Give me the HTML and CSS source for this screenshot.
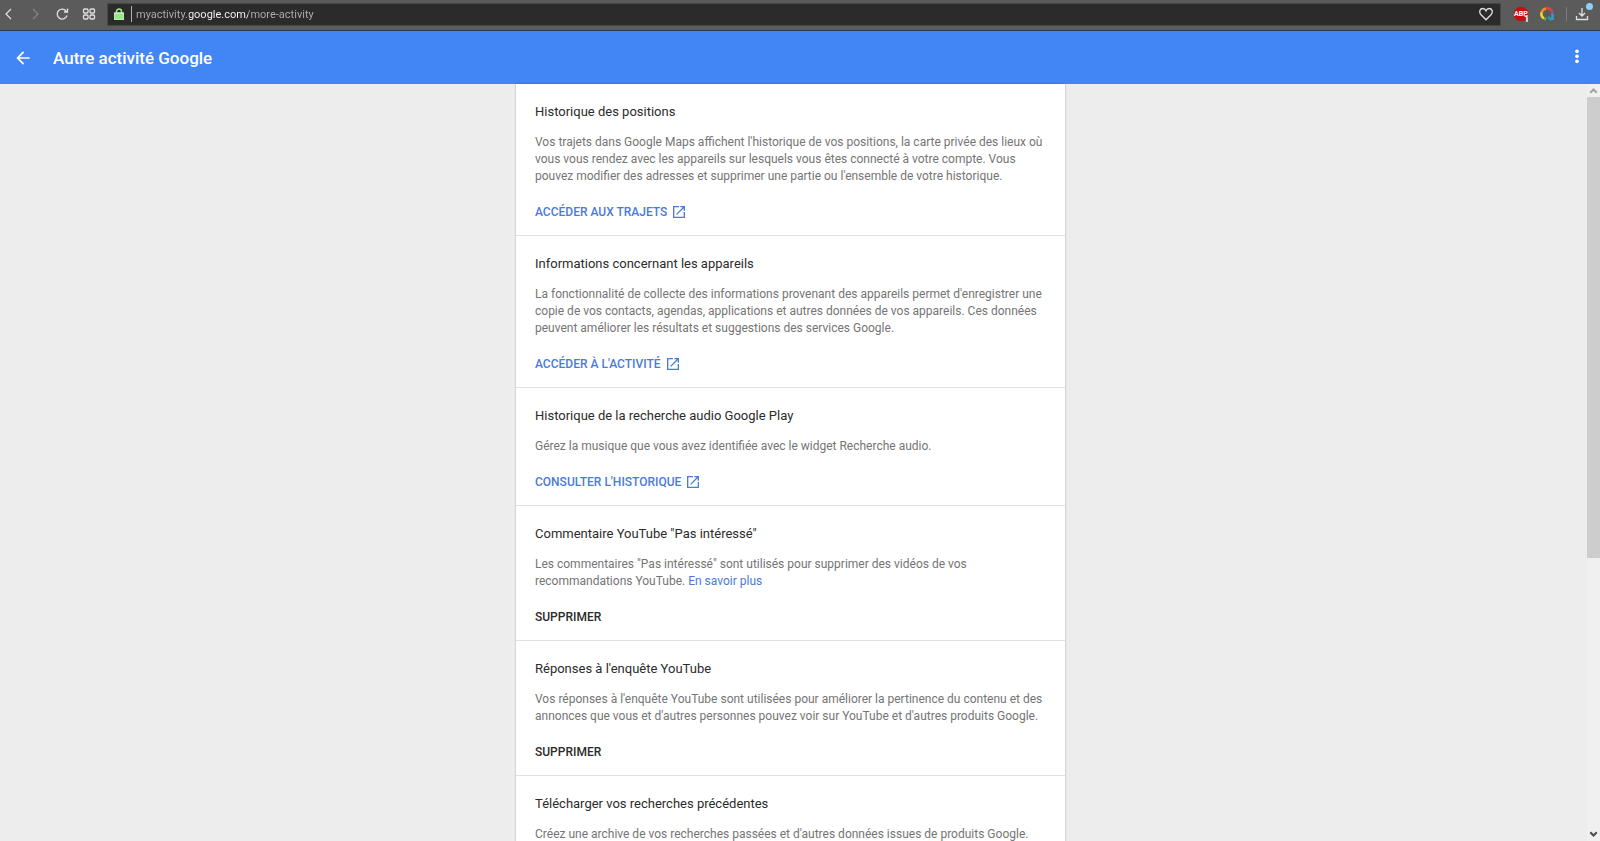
FILE: index.html
```html
<!DOCTYPE html>
<html lang="fr">
<head>
    <meta charset="UTF-8">
    <meta name="viewport" content="width=device-width, initial-scale=1.0">
    <title>Autre activité Google</title>
    <link rel="stylesheet" href="styles.css">
</head>
<body>
    <!-- Barre du navigateur -->
    <div class="browser-bar">
        <div class="browser-nav">
            <button type="button" aria-label="Précédent"><svg viewBox="0 0 14 14"><path d="M10 2L5 7l5 5"/></svg></button>
            <button type="button" class="disabled" aria-label="Suivant"><svg viewBox="0 0 14 14"><path d="M5 2l5 5-5 5"/></svg></button>
            <button type="button" aria-label="Actualiser"><svg viewBox="0 0 14 14"><path d="M11.500 4.500A5 5 0 1 0 12 8.500M12.500 1.500v3.500H9"/></svg></button>
            <button type="button" aria-label="Accès rapide"><svg viewBox="0 0 14 14"><rect x="1.500" y="2" width="4.500" height="4" rx="1"/><rect x="8" y="2" width="4.500" height="4" rx="1"/><rect x="1.500" y="8" width="4.500" height="4" rx="1"/><rect x="8" y="8" width="4.500" height="4" rx="1"/></svg></button>
        </div>
        <div class="address">
            <svg class="lock" viewBox="0 0 10 12"><path d="M2.500 6V3.500a2.500 2.500 0 0 1 5 0V6" fill="none" stroke="#90ee7e" stroke-width="1.500"/><rect x="0" y="5" width="10" height="7" rx="1" fill="#90ee7e"/></svg>
            <span class="caret"></span>
            <input type="text" class="url" aria-label="Adresse" value="myactivity.google.com/more-activity">
            <button type="button" aria-label="Favoris"><svg viewBox="0 0 14 14"><path d="M7 12.800L2 7.800C-.5 4.800 1 1.500 3.800 1.500 5.500 1.500 6.500 2.500 7 3.800 7.500 2.500 8.500 1.500 10.200 1.500 13 1.500 14.500 4.800 12 7.800z"/></svg></button>
        </div>
        <div class="extensions">
            <button type="button" class="extension" aria-label="Adblock Plus">
                <svg viewBox="0 0 14 14"><path d="M4 0h6l4 4v6l-4 4H4L0 10V4z" fill="#c70d0d" stroke="none"/></svg>
                <span class="abp">ABP</span>
                <span class="count">1</span>
            </button>
            <button type="button" class="extension" aria-label="Recherche">
                <svg viewBox="0 0 14 14"><g stroke-width="2.500"><path d="M4 11.500A5.500 5.500 0 0 1 1.800 5" stroke="#f5d327"/><path d="M1.800 5A5.500 5.500 0 0 1 6 1.500" stroke="#f58a1f"/><path d="M6 1.500A5.500 5.500 0 0 1 11 3" stroke="#e8453c"/><path d="M11 3a5.500 5.500 0 0 1 1.500 4" stroke="#b04a8c"/><path d="M12.500 7v6" stroke="#2f9fd8"/><path d="M8 10l3.500 3" stroke="#1fa3a8"/><path d="M4 11.500l2 .8" stroke="#5cb85c"/></g></svg>
            </button>
            <span class="divider"></span>
            <button type="button" aria-label="Téléchargements">
                <svg viewBox="0 0 14 14"><path d="M7 1v8M4 6l3 3 3-3M1.500 9v3.500h11V9"/></svg>
                <span class="dot"></span>
            </button>
        </div>
    </div>

    <header class="app-bar">
        <a href="#" aria-label="Retour"><svg viewBox="0 0 24 24"><path d="M20 11H7.830l5.590-5.590L12 4l-8 8 8 8 1.410-1.410L7.830 13H20v-2z"/></svg></a>
        <h1>Autre activité Google</h1>
        <button type="button" aria-label="Plus d'options"><svg viewBox="0 0 24 24"><circle cx="12" cy="4" r="2.200"/><circle cx="12" cy="10" r="2.200"/><circle cx="12" cy="16" r="2.200"/></svg></button>
    </header>

    <div class="page">
        <main class="content">
            <section class="activity">
                <h2>Historique des positions</h2>
                <p>Vos trajets dans Google Maps affichent l'historique de vos positions, la carte privée des lieux où vous vous rendez avec les appareils sur lesquels vous êtes connecté à votre compte. Vous pouvez modifier des adresses et supprimer une partie ou l'ensemble de votre historique.</p>
                <a href="#" class="action">Accéder aux trajets <svg viewBox="0 0 24 24"><path d="M19 19H5V5h7V3H3v18h18v-9h-2v7zM14 3v2h3.590l-9.830 9.830 1.410 1.410L19 6.410V10h2V3h-7z"/></svg></a>
            </section>
            <section class="activity">
                <h2>Informations concernant les appareils</h2>
                <p>La fonctionnalité de collecte des informations provenant des appareils permet d'enregistrer une copie de vos contacts, agendas, applications et autres données de vos appareils. Ces données peuvent améliorer les résultats et suggestions des services Google.</p>
                <a href="#" class="action">Accéder à l'activité <svg viewBox="0 0 24 24"><path d="M19 19H5V5h7V3H3v18h18v-9h-2v7zM14 3v2h3.590l-9.830 9.830 1.410 1.410L19 6.410V10h2V3h-7z"/></svg></a>
            </section>
            <section class="activity">
                <h2>Historique de la recherche audio Google Play</h2>
                <p>Gérez la musique que vous avez identifiée avec le widget Recherche audio.</p>
                <a href="#" class="action">Consulter l'historique <svg viewBox="0 0 24 24"><path d="M19 19H5V5h7V3H3v18h18v-9h-2v7zM14 3v2h3.590l-9.830 9.830 1.410 1.410L19 6.410V10h2V3h-7z"/></svg></a>
            </section>
            <section class="activity">
                <h2>Commentaire YouTube "Pas intéressé"</h2>
                <p>Les commentaires "Pas intéressé" sont utilisés pour supprimer des vidéos de vos recommandations YouTube. <a href="#">En savoir plus</a></p>
                <button type="button" class="action">Supprimer</button>
            </section>
            <section class="activity">
                <h2>Réponses à l'enquête YouTube</h2>
                <p>Vos réponses à l'enquête YouTube sont utilisées pour améliorer la pertinence du contenu et des annonces que vous et d'autres personnes pouvez voir sur YouTube et d'autres produits Google.</p>
                <button type="button" class="action">Supprimer</button>
            </section>
            <section class="activity">
                <h2>Télécharger vos recherches précédentes</h2>
                <p>Créez une archive de vos recherches passées et d'autres données issues de produits Google.</p>
            </section>
        </main>
        <div class="scrollbar">
            <svg class="arrow up" viewBox="0 0 12 12"><path d="M3 8l3-3 3 3"/></svg>
            <div class="track"><div class="thumb"></div></div>
            <svg class="arrow" viewBox="0 0 12 12"><path d="M3 4l3 3 3-3"/></svg>
        </div>
    </div>
</body>
</html>
```
FILE: styles.css
```css
* {
    box-sizing: border-box;
}

body {
    display: flex;
    flex-direction: column;
    height: 100vh;
    margin: 0;
    overflow: hidden;
    background-color: #ededed;
    color: #2b2b2b;
    font-family: Roboto, sans-serif;
}

button {
    padding: 0;
    border: none;
    background: none;
    color: inherit;
    font-family: inherit;
    cursor: pointer;
}

a {
    color: #4a7bd8;
    text-decoration: none;
}

/* Barre du navigateur */
.browser-bar {
    display: flex;
    align-items: center;
    flex-shrink: 0;
    height: 31px;
    padding-bottom: 2px;
    border-bottom: 1px solid #2b3a55;
    background-color: #5b5b5b;
    color: #e0e0e0;
}

.browser-bar button {
    display: block;
    position: relative;
    width: 14px;
    height: 14px;
}

.browser-bar svg {
    display: block;
    fill: none;
    stroke: currentColor;
    stroke-width: 1.3;
}

.browser-nav {
    display: flex;
    gap: 13px;
    padding: 0 11px 0 1px;
}

.browser-nav .disabled {
    color: #858585;
}

.address {
    display: flex;
    align-items: center;
    flex: 1;
    height: 23px;
    padding: 0 7px 0 6px;
    border: 1px solid #474747;
    background-color: #2b2b2b;
}

.lock {
    width: 10px;
    height: 12px;
}

.caret {
    width: 1px;
    height: 16px;
    margin: 0 4px 0 7px;
    background-color: #b0b0b0;
}

/* Le domaine est plus clair que le reste de l'adresse */
.url {
    flex: 1;
    padding: 0;
    border: none;
    outline: none;
    background: linear-gradient(to right, #b0b0b0 53px, #ffffff 53px, #ffffff 112px, #b0b0b0 112px);
    -webkit-background-clip: text;
    background-clip: text;
    color: transparent;
    font-family: Roboto, sans-serif;
    font-size: 11px;
}

.extensions {
    display: flex;
    align-items: center;
    gap: 8px;
    padding: 0 11px 0 13px;
}

.browser-bar .extension {
    margin-right: 4px;
}

.abp {
    position: absolute;
    top: 3px;
    left: 0;
    color: #ffffff;
    font-size: 7px;
    font-weight: bold;
    line-height: 8px;
}

.count {
    position: absolute;
    top: 8px;
    left: 10px;
    color: #ffffff;
    font-size: 9px;
    font-weight: bold;
    line-height: 9px;
}

.divider {
    width: 1px;
    height: 14px;
    background-color: #7d7d7d;
}

.dot {
    position: absolute;
    top: -4px;
    right: -4px;
    width: 7px;
    height: 7px;
    border-radius: 50%;
    background-color: #8fd0f5;
}

/* En-tête */
.app-bar {
    display: flex;
    align-items: center;
    flex-shrink: 0;
    height: 53px;
    padding: 0 13px;
    background-color: #4285f4;
    color: #ffffff;
}

.app-bar svg {
    display: block;
    width: 20px;
    height: 20px;
    fill: #ffffff;
}

.app-bar h1 {
    flex: 1;
    margin: 0 0 0 20px;
    font-size: 17px;
    font-weight: 500;
}

/* Contenu */
.page {
    display: flex;
    flex: 1;
    gap: 6px;
    min-height: 0;
}

.content {
    width: 549px;
    height: max-content;
    margin: 0 auto;
    background-color: #ffffff;
    box-shadow: 0 0 2px rgba(0, 0, 0, 0.3);
}

.activity {
    padding: 18px 19px 15px;
    border-bottom: 1px solid #e0e0e0;
}

.activity h2 {
    margin: 0 0 12px;
    font-size: 13px;
    font-weight: 400;
    line-height: 20px;
}

.activity p {
    margin: 0 0 19px;
    color: #757575;
    font-size: 12px;
    line-height: 17px;
}

.action {
    display: flex;
    align-items: center;
    gap: 4px;
    height: 16px;
    font-size: 12px;
    font-weight: 500;
    text-transform: uppercase;
}

.action svg {
    width: 16px;
    height: 16px;
    fill: currentColor;
}

/* Barre de défilement */
.scrollbar {
    display: flex;
    flex-direction: column;
    width: 13px;
    background-color: #f0f0f0;
}

.track {
    flex: 1;
}

.thumb {
    height: 63%;
    background-color: #cdcdcd;
}

.arrow {
    width: 13px;
    height: 13px;
    fill: none;
    stroke: #505050;
    stroke-width: 2;
}

.arrow.up {
    stroke: #a3a3a3;
}
```
